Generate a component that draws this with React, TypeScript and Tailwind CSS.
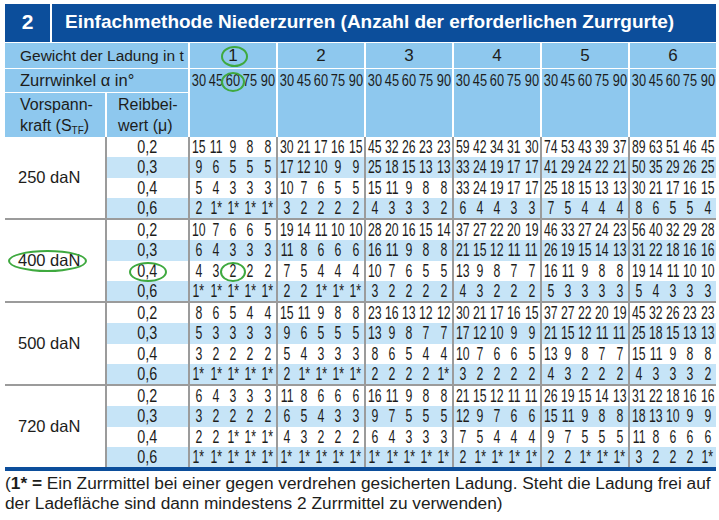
import React from 'react';

const mu = ['0,2', '0,3', '0,4', '0,6'];

const blocks: { force: string; rows: string[][] }[] = [
  {
    force: '250 daN',
    rows: [
      ['15 11 9 8 8', '30 21 17 16 15', '45 32 26 23 23', '59 42 34 31 30', '74 53 43 39 37', '89 63 51 46 45'],
      ['9 6 5 5 5', '17 12 10 9 9', '25 18 15 13 13', '33 24 19 17 17', '41 29 24 22 21', '50 35 29 26 25'],
      ['5 4 3 3 3', '10 7 6 5 5', '15 11 9 8 8', '33 24 19 17 17', '25 18 15 13 13', '30 21 17 16 15'],
      ['2 1* 1* 1* 1*', '3 2 2 2 2', '4 3 3 3 2', '6 4 4 3 3', '7 5 4 4 4', '8 6 5 5 4'],
    ],
  },
  {
    force: '400 daN',
    rows: [
      ['10 7 6 6 5', '19 14 11 10 10', '28 20 16 15 14', '37 27 22 20 19', '46 33 27 24 23', '56 40 32 29 28'],
      ['6 4 3 3 3', '11 8 6 6 6', '16 11 9 8 8', '21 15 12 11 11', '26 19 15 14 13', '31 22 18 16 16'],
      ['4 3 2 2 2', '7 5 4 4 4', '10 7 6 5 5', '13 9 8 7 7', '16 11 9 8 8', '19 14 11 10 10'],
      ['1* 1* 1* 1* 1*', '2 2 1* 1* 1*', '3 2 2 2 2', '4 3 2 2 2', '5 3 3 3 3', '5 4 3 3 3'],
    ],
  },
  {
    force: '500 daN',
    rows: [
      ['8 6 5 4 4', '15 11 9 8 8', '23 16 13 12 12', '30 21 17 16 15', '37 27 22 20 19', '45 32 26 23 23'],
      ['5 3 3 3 3', '9 6 5 5 5', '13 9 8 7 7', '17 12 10 9 9', '21 15 12 11 11', '25 18 15 13 13'],
      ['3 2 2 2 2', '5 4 3 3 3', '8 6 5 4 4', '10 7 6 6 5', '13 9 8 7 7', '15 11 9 8 8'],
      ['1* 1* 1* 1* 1*', '2 1* 1* 1* 1*', '2 2 2 2 1*', '3 2 2 2 2', '4 3 2 2 2', '4 3 3 3 2'],
    ],
  },
  {
    force: '720 daN',
    rows: [
      ['6 4 3 3 3', '11 8 6 6 6', '16 11 9 8 8', '21 15 12 11 11', '26 19 15 14 13', '31 22 18 16 16'],
      ['3 2 2 2 2', '6 5 4 3 3', '9 7 5 5 5', '12 9 7 6 6', '15 11 9 8 8', '18 13 10 9 9'],
      ['2 2 1* 1* 1*', '4 3 2 2 2', '6 4 3 3 3', '7 5 4 4 4', '9 7 5 5 5', '11 8 6 6 6'],
      ['1* 1* 1* 1* 1*', '1* 1* 1* 1* 1*', '1* 1* 1* 1* 1*', '2 1* 1* 1* 1*', '2 2 1* 1* 1*', '3 2 2 2 1*'],
    ],
  },
];

const angles = ['30', '45', '60', '75', '90'];

function DataBlock({ force, rows }: { force: string; rows: string[][] }) {
  return (
    <div className="grid grid-cols-[100px_81px_repeat(6,86px)] gap-x-[2px] bg-[#9b9b9b]">
      <div className="flex items-center bg-white pl-[13px] text-[16.5px]">{force}</div>
      <div className="flex flex-col">
        {mu.map((m, i) => (
          <div
            key={m}
            className={`flex h-[20.25px] items-center justify-center leading-[20px] ${i % 2 ? 'bg-[#c6e4f7]' : 'bg-white'}`}
          >
            <span className="inline-block scale-x-[0.82] text-[17.5px]">{m}</span>
          </div>
        ))}
      </div>
      {[0, 1, 2, 3, 4, 5].map((g) => (
        <div key={g} className="flex flex-col">
          {rows.map((r, i) => (
            <div
              key={i}
              className={`grid h-[20.25px] grid-cols-5 leading-[20px] ${i % 2 ? 'bg-[#c6e4f7]' : 'bg-white'}`}
            >
              {r[g].split(' ').map((v, j) => (
                <div key={j} className="flex items-center justify-center">
                  <span className="inline-block scale-x-[0.7] text-[17.5px]">{v}</span>
                </div>
              ))}
            </div>
          ))}
        </div>
      ))}
    </div>
  );
}

export default function App() {
  return (
    <div className="relative h-[520px] w-[719px] overflow-hidden bg-white pt-[4px] font-['Liberation_Sans',Arial,sans-serif] text-[#1d1d1b]">
      <div className="ml-[5px] w-[711px]">
        {/* title bar */}
        <div className="flex h-[38px] bg-[#0c4e9b] font-bold text-white">
          <div className="flex w-[45px] items-center justify-center pb-[2px] text-[21px]">2</div>
          <div className="w-[2px] bg-white" />
          <div className="flex items-center pb-[2px] pl-[13px] text-[19px]">
            Einfachmethode Niederzurren (Anzahl der erforderlichen Zurrgurte)
          </div>
        </div>

        {/* header */}
        <div className="mt-[1px] grid grid-cols-[100px_81px_repeat(6,86px)] grid-rows-[25px_23px_44px] gap-x-[2px] gap-y-[1px] bg-white text-[16px]">
          <div className="col-span-2 flex items-center whitespace-nowrap bg-[#8ec8ee] pl-[15px] text-[15.5px]">
            Gewicht der Ladung in t
          </div>
          {[1, 2, 3, 4, 5, 6].map((n) => (
            <div key={n} className="flex items-center justify-center bg-[#8ec8ee] text-[17px]">
              {n}
            </div>
          ))}
          <div className="col-span-2 flex items-center whitespace-nowrap bg-[#8ec8ee] pl-[15px] text-[16.5px]">
            Zurrwinkel α in°
          </div>
          {[1, 2, 3, 4, 5, 6].map((n) => (
            <div key={n} className="row-span-2 bg-[#8ec8ee]">
              <div className="grid h-[23px] grid-cols-5">
                {angles.map((a) => (
                  <div key={a} className="flex items-center justify-center">
                    <span className="inline-block scale-x-[0.8] text-[16px]">{a}</span>
                  </div>
                ))}
              </div>
            </div>
          ))}
          <div className="bg-[#8ec8ee] pl-[15px] pt-[1px] leading-[21px]">
            Vorspann-
            <br />
            kraft (S<sub className="text-[10px]">TF</sub>)
          </div>
          <div className="bg-[#8ec8ee] pl-[11px] pt-[1px] leading-[21px]">
            Reibbei-
            <br />
            wert (μ)
          </div>
        </div>

        {/* data */}
        {blocks.map((b, i) => (
          <React.Fragment key={b.force}>
            {i > 0 && <div className="h-[2px] bg-[#9b9b9b]" />}
            <DataBlock force={b.force} rows={b.rows} />
          </React.Fragment>
        ))}
        <div className="h-[4px] bg-[#0c4e9b]" />

        {/* footnote */}
        <div className="mt-[2px] whitespace-nowrap text-[17.3px] leading-[20px]">
          <div>
            (<span className="font-bold">1* =</span> Ein Zurrmittel bei einer gegen verdrehen gesicherten Ladung. Steht die Ladung frei auf
          </div>
          <div>der Ladefläche sind dann mindestens 2 Zurrmittel zu verwenden)</div>
        </div>
      </div>

      {/* green markers */}
      <div className="absolute left-[221px] top-[46px] h-[21px] w-[27px] rounded-[50%] border-[2.5px] border-[#3fa93f]" />
      <div className="absolute left-[221px] top-[72px] h-[20px] w-[24px] rounded-[50%] border-[2.5px] border-[#3fa93f]" />
      <div className="absolute left-[8px] top-[250px] h-[22px] w-[79px] rounded-[50%] border-[2.5px] border-[#3fa93f]" />
      <div className="absolute left-[129px] top-[262px] h-[20px] w-[38px] rounded-[50%] border-[2.5px] border-[#3fa93f]" />
      <div className="absolute left-[220px] top-[262px] h-[20px] w-[26px] rounded-[50%] border-[2.5px] border-[#3fa93f]" />
    </div>
  );
}
